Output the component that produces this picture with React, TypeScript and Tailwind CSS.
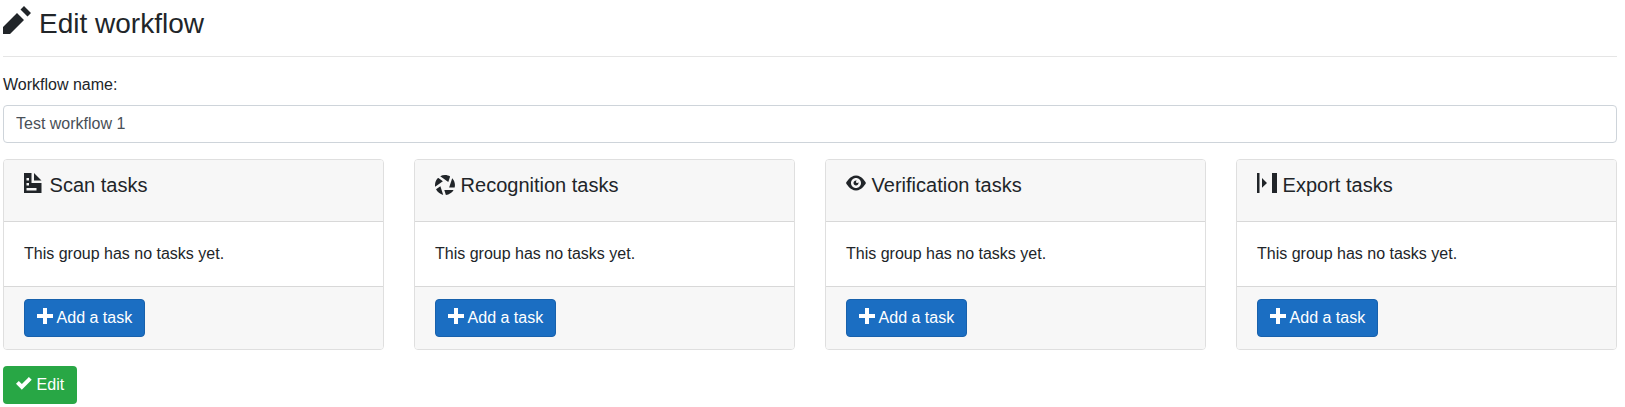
import React from "react";

const paths = {
  pencil: "M6 0l-1 1 2 2 1-1-2-2zm-2 2l-4 4v2h2l4-4-2-2z",
  spreadsheet:
    "M0 0v8h7v-4h-4v-4h-3zm4 0v3h3l-3-3zm-3 2h1v1h-1v-1zm0 2h1v1h-1v-1zm0 2h4v1h-4v-1z",
  aperture:
    "M4 0c-.69 0-1.34.19-1.91.5l3.22 2.34.75-2.25c-.6-.36-1.31-.59-2.06-.59zm-2.75 1.13c-.76.73-1.25 1.74-1.25 2.88 0 .25.02.48.06.72l3.09-2.22-1.91-1.38zm5.63.13l-1.22 3.75h2.19c.08-.32.13-.65.13-1 0-1.07-.44-2.03-1.09-2.75zm-4.72 3.22l-1.75 1.25c.55 1.13 1.6 1.99 2.88 2.22l-1.13-3.47zm1.56 1.53l.63 1.97c1.33-.12 2.46-.88 3.09-1.97h-3.72z",
  eye: "M4.03 1c-2.53 0-4.03 3-4.03 3s1.5 3 4.03 3c2.47 0 3.97-3 3.97-3s-1.5-3-3.97-3zm-.03 1c1.11 0 2 .9 2 2 0 1.11-.89 2-2 2-1.1 0-2-.89-2-2 0-1.1.9-2 2-2zm0 1c-.55 0-1 .45-1 1s.45 1 1 1 1-.45 1-1c0-.1-.04-.19-.06-.28-.08.16-.24.28-.44.28-.28 0-.5-.22-.5-.5 0-.2.12-.36.28-.44-.09-.03-.18-.06-.28-.06z",
  exportBar: "M0 0h1v8h-1zM2 2l2 1.95-2 1.95zM6 0h2v8h-2z",
  plus: "M3 0v3h-3v2h3v3h2v-3h3v-2h-3v-3h-2z",
  check:
    "M6.41 1l-.69.72-2.78 2.78-.81-.78-.72-.72-1.41 1.41.72.72 1.5 1.5.69.72.72-.72 3.5-3.5.72-.72-1.41-1.41z",
};

type IconName = keyof typeof paths;

function Icon({ name, className }: { name: IconName; className: string }) {
  return (
    <svg viewBox="0 0 8 8" fill="currentColor" aria-hidden="true" className={"shrink-0 " + className}>
      <path d={paths[name]} />
    </svg>
  );
}

const groups: { title: string; icon: IconName; iconClass: string }[] = [
  { title: "Scan tasks", icon: "spreadsheet", iconClass: "size-5" },
  { title: "Recognition tasks", icon: "aperture", iconClass: "size-5 mt-0.5" },
  { title: "Verification tasks", icon: "eye", iconClass: "size-5" },
  { title: "Export tasks", icon: "exportBar", iconClass: "size-5" },
];

function TaskCard({ title, icon, iconClass }: { title: string; icon: IconName; iconClass: string }) {
  return (
    <section className="overflow-hidden rounded border border-[#dfdfdf] bg-white">
      <header className="flex h-[62px] items-start gap-[5.6px] border-b border-[#d8d8d8] bg-[#f7f7f7] px-5 pt-[13px]">
        <Icon name={icon} className={iconClass} />
        <h2 className="text-xl leading-6">{title}</h2>
      </header>
      <p className="p-5">This group has no tasks yet.</p>
      <footer className="border-t border-[#d8d8d8] bg-[#f7f7f7] px-5 py-3">
        <button className="flex h-[38px] w-[121px] items-center gap-[3.6px] whitespace-nowrap rounded border border-[#1861ac] bg-[#1b6ec2] pl-3 text-white">
          <Icon name="plus" className="mb-1 size-4" />
          Add a task
        </button>
      </footer>
    </section>
  );
}

export default function App() {
  return (
    <main className="h-[407px] bg-white pl-[3px] pr-2 pt-1.5 font-['Liberation_Sans',Arial,sans-serif] text-base leading-6 text-[#212529]">
      <h1 className="flex h-[50px] items-start gap-2 text-[28px] leading-9">
        <Icon name="pencil" className="size-7" />
        Edit workflow
      </h1>
      <hr className="border-t border-[#e5e5e5]" />
      <label htmlFor="workflow-name" className="mt-4 block">
        Workflow name:
      </label>
      <input
        id="workflow-name"
        defaultValue="Test workflow 1"
        className="mt-2 block h-[38px] w-full rounded border border-[#ced4da] bg-white px-3 text-[#495057]"
      />
      <div className="mt-4 grid grid-cols-4 gap-[30px]">
        {groups.map((g) => (
          <TaskCard key={g.title} {...g} />
        ))}
      </div>
      <button className="mt-4 flex h-[38px] w-[74px] items-center gap-[4.6px] rounded bg-[#28a745] pl-[13px] text-white">
        <Icon name="check" className="mb-1 size-4" />
        Edit
      </button>
    </main>
  );
}
